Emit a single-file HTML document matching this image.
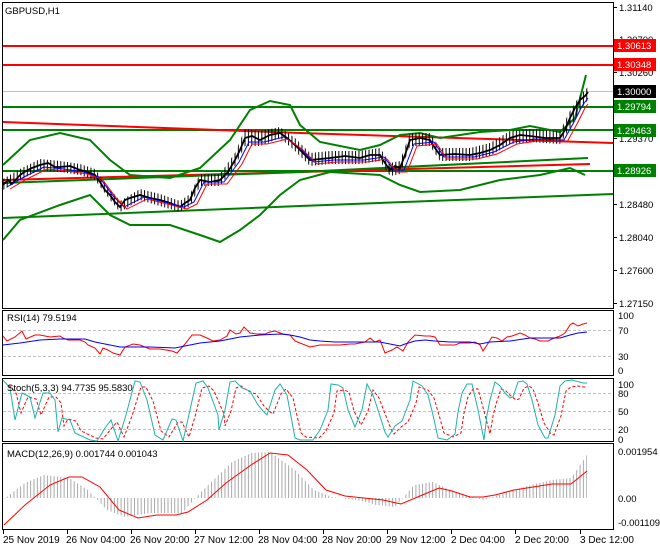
<!DOCTYPE html>
<html><head><meta charset="utf-8"><style>
body{margin:0;background:#fff;width:660px;height:550px;overflow:hidden;font-family:"Liberation Sans",sans-serif}
svg text{font-family:"Liberation Sans",sans-serif;font-size:9.5px;fill:#000}
</style></head><body>
<svg width="660" height="550" viewBox="0 0 660 550" xmlns="http://www.w3.org/2000/svg">
<defs>
<pattern id="vs" width="3.35" height="10" patternUnits="userSpaceOnUse"><rect x="0" y="0" width="1" height="10" fill="#000"/></pattern>
<pattern id="hs" width="3.35" height="10" patternUnits="userSpaceOnUse"><rect x="0" y="0" width="1" height="10" fill="#a8a8a8"/></pattern>
</defs>
<g shape-rendering="crispEdges">
<rect x="2.5" y="2.5" width="611" height="306" fill="none" stroke="#000"/>
<rect x="2.5" y="310.5" width="611" height="65" fill="none" stroke="#000"/>
<rect x="2.5" y="378.5" width="611" height="63" fill="none" stroke="#000"/>
<rect x="2.5" y="443.5" width="611" height="86" fill="none" stroke="#000"/>
<line x1="613" y1="7.5" x2="617" y2="7.5" stroke="#000"/><line x1="613" y1="39.5" x2="617" y2="39.5" stroke="#000"/><line x1="613" y1="72.5" x2="617" y2="72.5" stroke="#000"/><line x1="613" y1="138.5" x2="617" y2="138.5" stroke="#000"/><line x1="613" y1="204.5" x2="617" y2="204.5" stroke="#000"/><line x1="613" y1="237.5" x2="617" y2="237.5" stroke="#000"/><line x1="613" y1="270.5" x2="617" y2="270.5" stroke="#000"/><line x1="613" y1="303.5" x2="617" y2="303.5" stroke="#000"/>
<line x1="3" y1="46" x2="613" y2="46" stroke="#f00" stroke-width="2"/>
<line x1="3" y1="65" x2="613" y2="65" stroke="#f00" stroke-width="2"/>
<line x1="3" y1="91.5" x2="613" y2="91.5" stroke="#c0c0c0"/>
<line x1="3" y1="107" x2="613" y2="107" stroke="#008000" stroke-width="2"/>
<line x1="3" y1="130" x2="613" y2="130" stroke="#008000" stroke-width="2"/>
<line x1="3" y1="171" x2="613" y2="171" stroke="#008000" stroke-width="2"/>
</g>
<text x="619" y="11">1.31140</text><text x="619" y="43">1.30700</text><text x="619" y="76">1.30260</text><text x="619" y="142">1.29370</text><text x="619" y="208">1.28480</text><text x="619" y="241">1.28040</text><text x="619" y="274">1.27600</text><text x="619" y="307">1.27150</text>
<g fill="none" stroke-width="2">
<polyline stroke="#f00" points="3,122 300,133 613,143"/>
<polyline stroke="#f00" points="3,180 300,172 590,164"/>
<polyline stroke="#008000" points="3,218 300,206 613,194"/>
<polyline stroke="#008000" points="3,183 300,172 588,158"/>
<polyline stroke="#008000" points="3,165 30,140 60,133 90,140 110,160 130,175 170,178 200,168 230,140 250,110 270,101 290,105 300,125 320,142 360,150 380,145 400,135 420,133 440,138 480,132 510,130 530,126 560,132 575,118 586,75"/>
<polyline stroke="#008000" points="3,240 20,220 60,205 90,195 110,215 130,225 170,225 200,235 220,242 240,230 260,215 280,195 300,180 330,172 380,175 400,185 420,192 460,190 500,180 540,175 570,168 585,175"/>
</g>
<polygon fill="url(#vs)" points="3,179 20,169 40,159 60,161 80,164 95,169 110,189 120,201 140,189 160,194 180,201 190,194 200,174 220,174 235,153 245,129 260,131 280,127 295,138 310,153 330,151 360,151 380,148 390,163 400,161 410,133 430,133 440,148 470,148 490,143 510,131 530,129 560,131 570,111 580,95 588,87 588,100 580,110 570,128 560,144 530,142 510,144 490,156 470,161 440,161 430,146 410,146 400,174 390,176 380,161 360,164 330,164 310,166 295,151 280,138 260,146 245,146 235,166 220,186 200,186 190,206 180,212 160,206 140,200 120,212 110,200 95,180 80,175 60,172 40,170 20,180 3,190"/>
<polyline fill="none" stroke="#000" stroke-width="1.8" points="3,185 8,180 12,184 20,175 26,171 32,168 40,165 48,163 55,167 60,167 70,166 80,170 88,172 95,175 100,182 105,190 110,195 115,202 120,207 125,200 130,198 140,195 150,198 160,200 170,203 180,207 185,203 190,200 195,188 200,180 210,182 220,180 228,172 235,160 240,150 245,138 252,136 260,140 270,135 280,133 287,138 295,145 302,152 310,160 320,159 330,158 345,156 360,158 370,155 380,155 385,163 390,170 395,166 400,168 405,155 410,140 420,138 430,140 435,148 440,155 455,154 470,155 480,153 490,150 500,145 510,138 520,135 530,136 545,138 560,138 565,130 570,118 575,108 580,100 585,96 588,92"/>
<polyline fill="none" stroke="#00f" stroke-width="1" transform="translate(4,2)" points="3,185 20,175 40,165 60,167 80,170 95,175 110,195 120,205 140,195 160,200 180,205 190,200 200,180 220,180 235,160 245,140 260,140 280,135 295,145 310,160 330,158 360,158 380,155 390,168 400,168 410,142 430,140 440,155 470,155 490,150 510,140 530,137 560,138 570,120 578,104 584,96"/>
<polyline fill="none" stroke="#f00" stroke-width="1" transform="translate(7,4)" points="3,185 20,175 40,165 60,167 80,170 95,175 110,195 120,205 140,195 160,200 180,205 190,200 200,180 220,180 235,160 245,140 260,140 280,135 295,145 310,160 330,158 360,158 380,155 390,168 400,168 410,142 430,140 440,155 470,155 490,150 510,140 530,137 560,138 570,120 578,104 581,100"/>
<g shape-rendering="crispEdges">
<rect x="614" y="39" width="42" height="13" fill="#f00"/><rect x="614" y="58" width="42" height="13" fill="#f00"/><rect x="614" y="85" width="42" height="13" fill="#000"/><rect x="614" y="100" width="42" height="13" fill="#008000"/><rect x="614" y="124" width="42" height="13" fill="#008000"/><rect x="614" y="164" width="42" height="13" fill="#008000"/>
</g>
<text x="617" y="49" style="fill:#fff">1.30613</text>
<text x="617" y="68" style="fill:#fff">1.30348</text>
<text x="617" y="95" style="fill:#fff">1.30000</text>
<text x="617" y="110" style="fill:#fff">1.29794</text>
<text x="617" y="134" style="fill:#fff">1.29463</text>
<text x="617" y="174" style="fill:#fff">1.28926</text>
<text x="5" y="14">GBPUSD,H1</text>
<!-- RSI -->
<line x1="3" y1="330.5" x2="613" y2="330.5" stroke="#c0c0c0" stroke-dasharray="3,2" shape-rendering="crispEdges"/>
<line x1="3" y1="356.5" x2="613" y2="356.5" stroke="#c0c0c0" stroke-dasharray="3,2" shape-rendering="crispEdges"/>
<text x="7" y="321">RSI(14) 79.5194</text>
<text x="618" y="319">100</text><text x="618" y="334">70</text><text x="618" y="360">30</text><text x="618" y="374">0</text>
<g fill="none">
<polyline stroke="#f00" points="3,336 7,341 15,337 22,331 26,339 35,335 40,335 50,337 60,336 63,338 68,340 80,340 85,342 88,345 95,348 100,354 103,348 108,350 113,353 120,355 125,347 133,344 140,345 150,349 160,349 172,351 177,353 185,344 192,335 200,335 207,338 213,341 220,340 227,336 230,330 236,334 240,333 244,327 250,333 257,334 265,334 270,332 275,331 283,334 290,335 295,341 300,343 310,347 320,345 340,345 350,344 355,344 365,342 370,338 375,342 380,340 385,353 392,350 397,347 403,351 408,342 415,335 425,336 430,336 435,337 440,345 455,345 460,343 470,343 475,342 480,345 483,351 487,345 492,337 497,338 502,341 507,337 512,336 520,333 525,335 530,338 535,339 540,341 548,341 552,339 560,336 565,333 570,325 573,323 578,326 583,324 587,323"/>
<polyline stroke="#00f" points="3,345 20,343 40,340 60,339 85,339 95,342 110,345 120,347 150,347 175,348 185,346 200,343 220,341 240,337 260,335 280,334 290,335 300,337 310,340 320,341 335,342 355,342 380,342 390,344 400,346 405,344 415,341 425,340 435,341 450,342 470,342 480,344 490,342 510,341 530,338 545,338 560,338 570,335 578,333 587,332"/>
</g>
<!-- Stoch -->
<g shape-rendering="crispEdges">
<line x1="3" y1="393.5" x2="613" y2="393.5" stroke="#c0c0c0" stroke-dasharray="3,2"/>
<line x1="3" y1="411.5" x2="613" y2="411.5" stroke="#c0c0c0" stroke-dasharray="3,2"/>
<line x1="3" y1="429.5" x2="613" y2="429.5" stroke="#c0c0c0" stroke-dasharray="3,2"/>
</g>
<g fill="none">
<polyline stroke="#f00" stroke-dasharray="3,2" transform="translate(6,1)" points="3,384 10,392 15,412 22,396 30,398 35,414 43,396 50,396 55,402 58,425 62,418 70,420 75,430 90,437 97,438 105,428 111,421 118,436 126,415 135,386 140,386 147,400 155,430 163,436 172,421 176,421 183,436 190,412 196,387 203,385 208,390 218,413 219,425 225,410 230,387 235,385 242,390 250,393 258,405 263,410 267,413 275,393 280,388 287,397 295,432 300,436 313,437 320,430 328,412 331,390 338,389 343,391 348,410 355,424 362,410 367,389 373,397 378,410 385,428 388,433 395,426 402,421 410,402 413,386 422,389 428,397 433,414 438,432 447,436 455,432 458,412 462,396 467,388 472,388 478,410 484,433 487,415 490,403 495,388 500,390 505,395 510,399 513,398 518,387 523,385 527,388 532,402 538,422 545,433 548,434 555,415 560,390 565,386 572,385 578,386 580,386"/>
<polyline stroke="#20b2aa" points="3,380 10,388 15,420 22,393 30,397 35,418 43,393 50,393 55,400 58,432 62,418 70,420 75,433 90,440 97,441 105,428 111,420 118,441 126,415 135,381 140,382 147,400 155,435 163,440 172,419 176,420 183,441 190,410 196,383 203,381 208,388 218,415 219,430 225,410 230,382 235,381 242,388 250,391 258,405 263,411 267,415 275,390 280,384 287,395 295,438 300,440 303,440 313,440 320,430 328,410 331,384 338,385 343,388 348,410 355,427 362,410 367,384 373,395 378,410 385,432 388,437 395,426 402,421 410,400 413,381 422,386 428,395 433,415 438,438 447,440 455,434 458,412 462,393 467,384 472,384 478,410 484,440 487,415 490,400 495,382 500,386 505,393 510,398 513,397 518,382 523,381 527,384 532,400 538,425 545,438 548,438 555,415 560,386 565,381 572,380 583,383 587,383"/>
</g>
<text x="7" y="391">Stoch(5,3,3) 94.7735 95.5830</text>
<text x="618" y="388">100</text><text x="618" y="397">80</text><text x="618" y="415">50</text><text x="618" y="433">20</text><text x="618" y="443">0</text>
<!-- MACD -->
<polygon fill="url(#hs)" points="4,498 4,499 25,483 44,475 69,478 88,490 107,510 125,517 150,513 182,513 201,492 232,462 251,453 270,452 295,470 314,490 332,497 357,500 376,505 395,507 414,485 433,482 452,491 470,496 483,500 502,494 527,486 552,480 571,478 587,455 587,498"/>
<polyline fill="none" stroke="#f00" points="4,525 25,505 50,485 69,477 82,477 100,487 119,510 138,518 157,515 176,515 188,512 207,500 226,483 251,465 270,453 288,455 307,470 326,490 345,496 364,498 383,500 401,504 420,496 439,488 452,491 470,497 483,497 495,495 514,490 533,487 552,484 571,484 587,471"/>
<text x="7" y="457">MACD(12,26,9) 0.001744 0.001043</text>
<text x="618" y="455">0.001954</text><text x="618" y="502">0.00</text><text x="618" y="526">-0.001109</text>
<!-- dates -->
<g shape-rendering="crispEdges" stroke="#000">
<line x1="3.5" y1="530" x2="3.5" y2="534"/><line x1="67.5" y1="530" x2="67.5" y2="534"/><line x1="131.5" y1="530" x2="131.5" y2="534"/><line x1="195.5" y1="530" x2="195.5" y2="534"/><line x1="259.5" y1="530" x2="259.5" y2="534"/><line x1="323.5" y1="530" x2="323.5" y2="534"/><line x1="387.5" y1="530" x2="387.5" y2="534"/><line x1="451.5" y1="530" x2="451.5" y2="534"/><line x1="515.5" y1="530" x2="515.5" y2="534"/><line x1="580.5" y1="530" x2="580.5" y2="534"/>
</g>
<g style="font-size:10px">
<text x="3" y="543" style="font-size:10px">25 Nov 2019</text>
<text x="66" y="543" style="font-size:10px">26 Nov 04:00</text>
<text x="130" y="543" style="font-size:10px">26 Nov 20:00</text>
<text x="194" y="543" style="font-size:10px">27 Nov 12:00</text>
<text x="258" y="543" style="font-size:10px">28 Nov 04:00</text>
<text x="322" y="543" style="font-size:10px">28 Nov 20:00</text>
<text x="386" y="543" style="font-size:10px">29 Nov 12:00</text>
<text x="451" y="543" style="font-size:10px">2 Dec 04:00</text>
<text x="515" y="543" style="font-size:10px">2 Dec 20:00</text>
<text x="580" y="543" style="font-size:10px">3 Dec 12:00</text>
</g>
</svg>
</body></html>
